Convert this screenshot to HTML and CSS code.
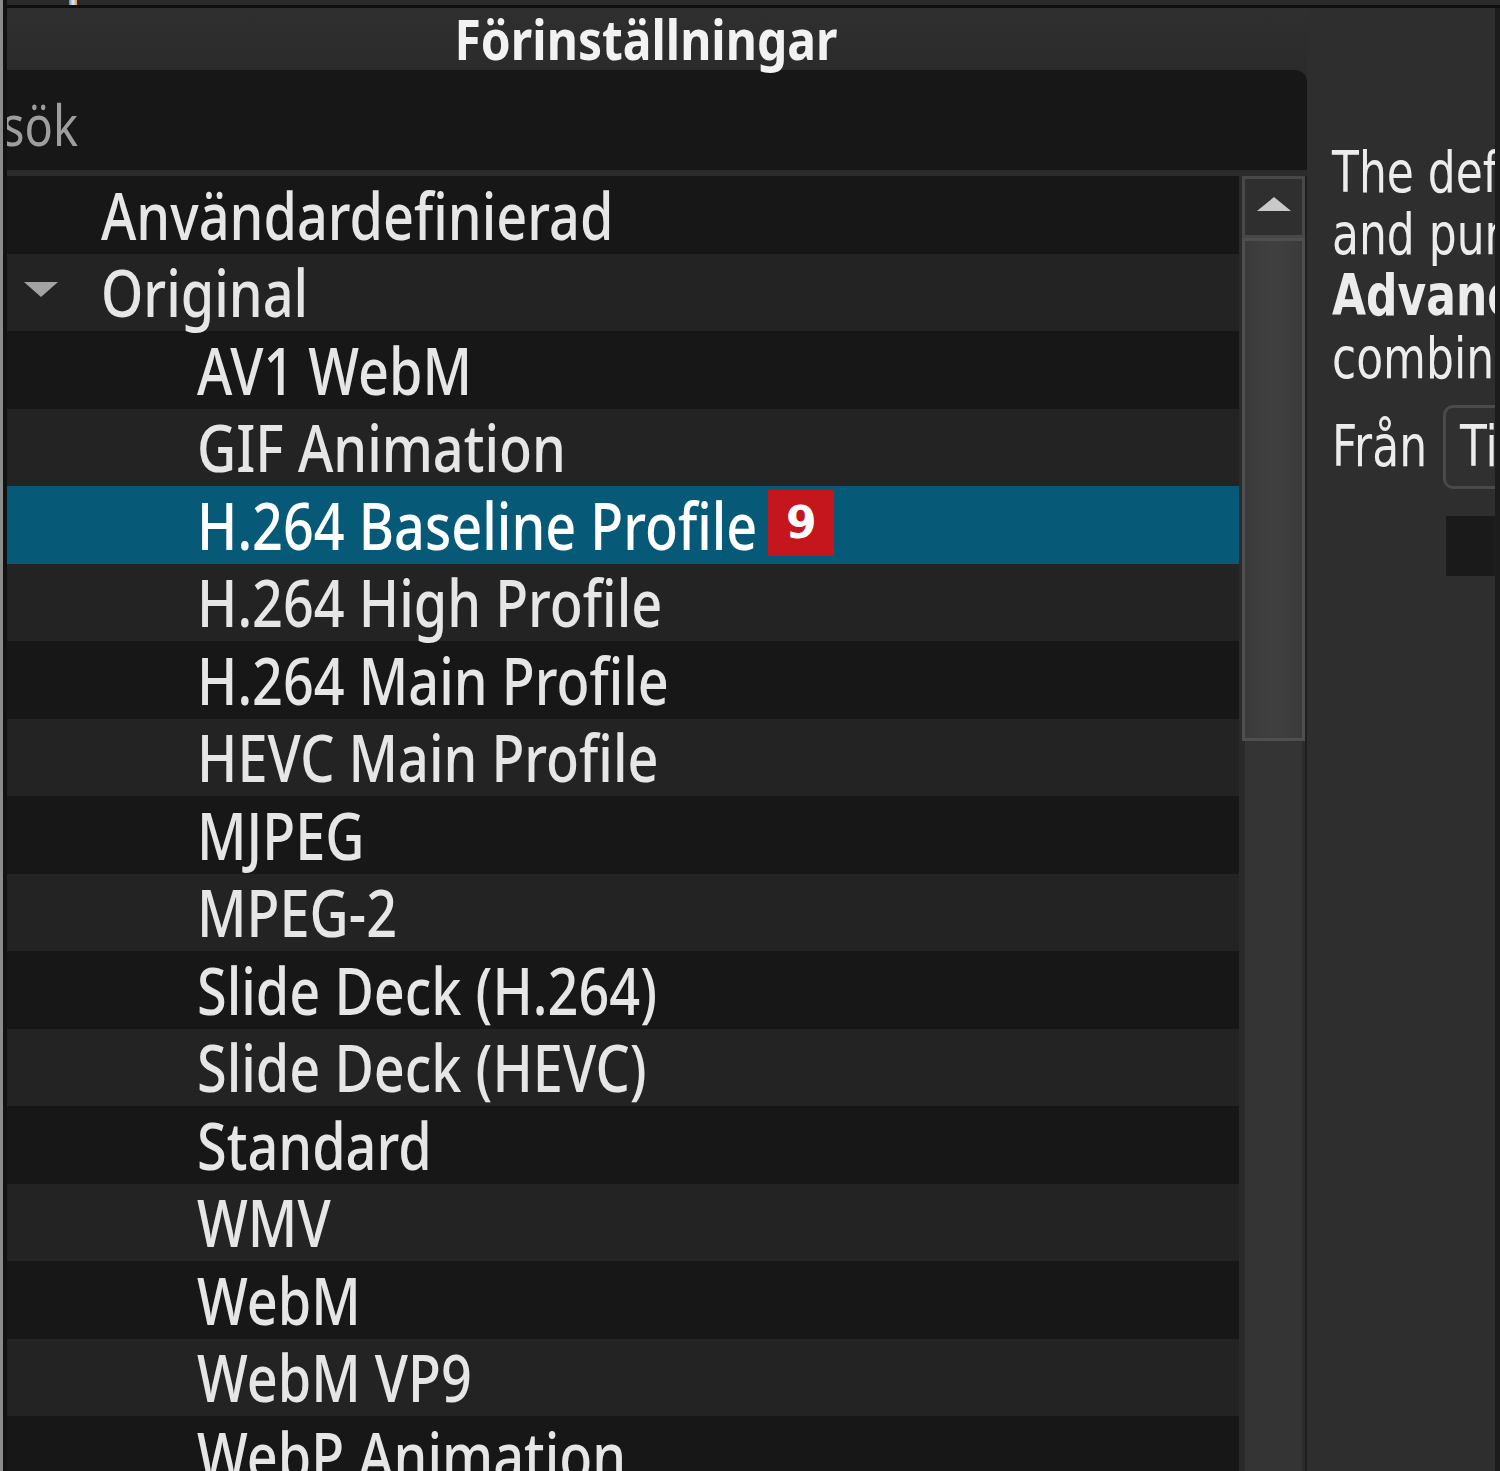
FILE: index.html
```html
<!DOCTYPE html>
<html lang="sv">
<head>
<meta charset="utf-8">
<title>Förinställningar</title>
<link rel="stylesheet" href="styles.css">
</head>
<body>
<div class="window">
  <div class="frame-left"></div>
  <div class="content">
    <div class="topstrip"><span class="tick"></span></div>
    <div class="panels">
      <section class="presets">
        <header class="dock-title"><span class="title-text">Förinställningar</span></header>
        <div class="search"><span class="placeholder">sök</span></div>
        <div class="tree">
          <div class="rows">
            <div class="row dark lvl0"><span class="label">Användardefinierad</span></div>
            <div class="row light lvl0"><span class="expander"></span><span class="label">Original</span></div>
            <div class="row dark lvl1"><span class="label">AV1 WebM</span></div>
            <div class="row light lvl1"><span class="label">GIF Animation</span></div>
            <div class="row selected lvl1"><span class="label">H.264 Baseline Profile</span><span class="badge">9</span></div>
            <div class="row light lvl1"><span class="label">H.264 High Profile</span></div>
            <div class="row dark lvl1"><span class="label">H.264 Main Profile</span></div>
            <div class="row light lvl1"><span class="label">HEVC Main Profile</span></div>
            <div class="row dark lvl1"><span class="label">MJPEG</span></div>
            <div class="row light lvl1"><span class="label">MPEG-2</span></div>
            <div class="row dark lvl1"><span class="label">Slide Deck (H.264)</span></div>
            <div class="row light lvl1"><span class="label">Slide Deck (HEVC)</span></div>
            <div class="row dark lvl1"><span class="label">Standard</span></div>
            <div class="row light lvl1"><span class="label">WMV</span></div>
            <div class="row dark lvl1"><span class="label">WebM</span></div>
            <div class="row light lvl1"><span class="label">WebM VP9</span></div>
            <div class="row dark lvl1"><span class="label">WebP Animation</span></div>
          </div>
          <div class="scrollbar">
            <div class="sb-up"><svg width="36" height="16" viewBox="0 0 36 16"><polygon points="18,1 35,15 1,15" fill="#c9c9c9"/></svg></div>
            <div class="sb-track"><div class="sb-handle"></div></div>
          </div>
        </div>
      </section>
      <section class="details">
        <div class="desc">
          <p class="line">The default</p>
          <p class="line">and purpose</p>
          <p class="line bold">Advanced</p>
          <p class="line">combination</p>
        </div>
        <div class="from-row">
          <span class="from-label">Från</span>
          <div class="combo"><span class="combo-text">Tidslinje</span></div>
        </div>
        <div class="dark-field"></div>
      </section>
    </div>
  </div>
</div>
</body>
</html>
```

FILE: styles.css
```css
html, body {
  margin: 0;
  padding: 0;
}
body {
  width: 1500px;
  height: 1471px;
  overflow: hidden;
  background: #2c2c2c;
  font-family: "Noto Sans", "Open Sans", sans-serif;
  color: #e6e6e6;
}
.window {
  display: flex;
  width: 1500px;
  height: 1471px;
}
.frame-left {
  width: 4px;
  flex: 0 0 4px;
  border-left: 3px solid #8c8c8c;
  background: #121212;
}
.content {
  flex: 1;
  display: flex;
  flex-direction: column;
  min-width: 0;
}
.topstrip {
  height: 5px;
  flex: 0 0 5px;
  background: #2a2a2a;
  border-bottom: 3px solid #0f0f0f;
  position: relative;
}
.tick {
  position: absolute;
  left: 62px;
  top: 0;
  width: 8px;
  height: 5px;
  background: linear-gradient(90deg, #4a8fd8, #e8e8e8, #e2914a);
}
.panels {
  flex: 1;
  display: flex;
  min-height: 0;
}
.presets {
  width: 1300px;
  flex: 0 0 1300px;
  display: flex;
  flex-direction: column;
  background: #2b2b2b;
}
.dock-title {
  height: 62px;
  flex: 0 0 62px;
  display: flex;
  align-items: center;
  justify-content: center;
  padding-right: 22px;
  background: linear-gradient(#2f2f2f, #2b2b2b);
}
.title-text {
  display: inline-block;
  font-weight: 700;
  font-size: 48px;
  line-height: 1;
  color: #f2f2f2;
  transform: scaleY(1.15);
}
.search {
  height: 100px;
  flex: 0 0 100px;
  background: #171717;
  border-top-right-radius: 12px;
  display: flex;
  align-items: center;
  overflow: hidden;
}
.placeholder {
  display: inline-block;
  margin-left: -5px;
  margin-top: 8px;
  font-size: 47px;
  line-height: 1;
  color: #9e9e9e;
  transform: scaleY(1.2);
}
.tree {
  margin-top: 6px;
  flex: 1;
  display: flex;
  min-height: 0;
  background: #2a2a2a;
  border-right: 2px solid #1f1f1f;
}
.rows {
  width: 1232px;
  flex: 0 0 1232px;
  display: flex;
  flex-direction: column;
  overflow: hidden;
}
.row {
  height: 77.5px;
  flex: 0 0 77.5px;
  display: flex;
  align-items: center;
  box-sizing: border-box;
  white-space: nowrap;
}
.row.dark { background: #161716; }
.row.light { background: #222322; }
.row.selected { background: #065a78; color: #ffffff; }
.row.lvl0 { padding-left: 94px; }
.row.lvl1 { padding-left: 190px; }
.expander {
  width: 0;
  height: 0;
  border-left: 17px solid transparent;
  border-right: 17px solid transparent;
  border-top: 15px solid #a3a3a3;
  margin-left: -77px;
  margin-right: 43px;
  margin-top: -6px;
}
.label {
  display: inline-block;
  font-size: 54px;
  font-weight: 500;
  line-height: 1;
  transform: scaleY(1.2);
}
.badge {
  display: inline-flex;
  align-items: center;
  justify-content: center;
  width: 66px;
  height: 66px;
  margin-left: 11px;
  margin-top: -4px;
  background: #c4161c;
  color: #ffffff;
  font-family: "DejaVu Sans", sans-serif;
  font-weight: 700;
  font-size: 44px;
  line-height: 1;
}
.scrollbar {
  width: 63px;
  flex: 0 0 63px;
  margin-left: 3px;
  display: flex;
  flex-direction: column;
  background: #353535;
}
.sb-up {
  height: 62px;
  flex: 0 0 62px;
  box-sizing: border-box;
  border: 3px solid #484848;
  background: #2f2f2f;
  display: flex;
  justify-content: center;
  padding-top: 17px;
}
.sb-track {
  flex: 1;
  background: #343434;
  border-left: 3px solid #2b2b2b;
  border-right: 3px solid #2b2b2b;
}
.sb-handle {
  height: 503px;
  margin: 0 -3px;
  box-sizing: border-box;
  border: 3px solid #4f4f4f;
  background: linear-gradient(90deg, #3b3b3b, #404040 50%, #3b3b3b);
}
.details {
  flex: 1;
  background: #2e2e2e;
  border-right: 5px solid #1c1c1c;
  padding-left: 25px;
  overflow: hidden;
  white-space: nowrap;
  font-family: "DejaVu Sans", "Verdana", sans-serif;
  color: #ececec;
}
.desc {
  margin-top: 133px;
  height: 250px;
  transform: scaleY(1.3);
  transform-origin: top left;
}
.line {
  margin: 0;
  font-size: 44px;
  line-height: 47.7px;
}
.line.bold { font-weight: 700; }
.from-row {
  display: flex;
  align-items: center;
  margin-top: 13px;
  height: 86px;
}
.from-label {
  display: inline-block;
  font-size: 44px;
  line-height: 1;
  transform: scaleY(1.3);
}
.combo {
  margin-left: 16px;
  height: 84px;
  width: 200px;
  flex: 0 0 200px;
  box-sizing: border-box;
  border: 3px solid #4a4a4a;
  border-radius: 10px;
  background: #303030;
  display: flex;
  align-items: center;
  padding-left: 14px;
}
.combo-text {
  display: inline-block;
  font-size: 44px;
  line-height: 1;
  transform: scaleY(1.3);
}
.dark-field {
  margin-top: 26px;
  margin-left: 114px;
  height: 60px;
  width: 200px;
  background: #1a1a1a;
}
```
